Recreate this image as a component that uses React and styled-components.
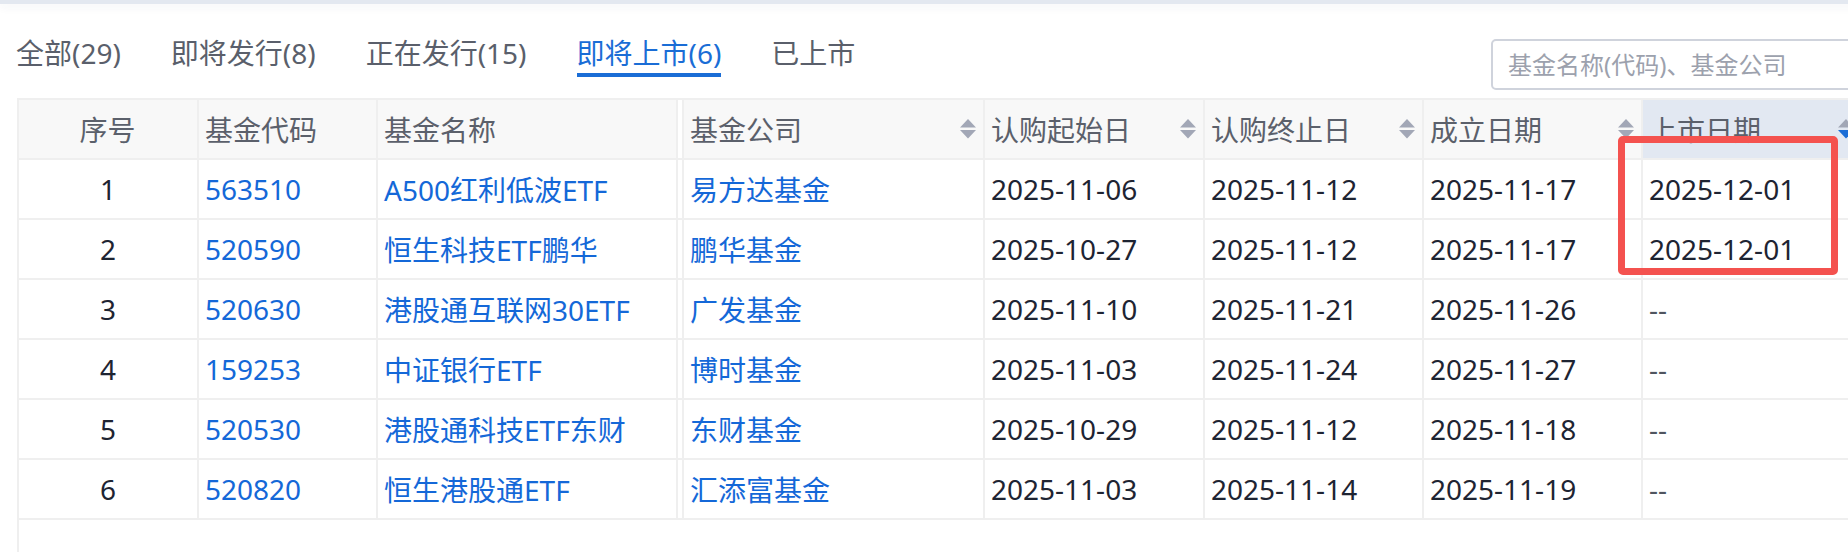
import React from 'react';
import styled, { createGlobalStyle } from 'styled-components';

const Global = createGlobalStyle`
  html, body { margin: 0; padding: 0; background: #fff; overflow: hidden; }
  body { font-family: "Noto Sans", "Noto Sans CJK SC", sans-serif; }
  * { box-sizing: border-box; }
`;

const Page = styled.div`
  position: relative;
  width: 1880px;
  height: 552px;
  overflow: hidden;
`;

const TopBand = styled.div`
  height: 4px;
  background: #e3e8f0;
  box-shadow: 0 3px 8px rgba(40, 60, 100, 0.07);
`;

const Toolbar = styled.div`
  display: flex;
  align-items: flex-start;
  height: 94px;
  padding: 29px 0 0 16px;
`;

const Tabs = styled.div`
  display: flex;
  gap: 50px;
`;

const Tab = styled.div`
  height: 44px;
  line-height: 40px;
  font-size: 28px;
  color: ${(p) => (p.$active ? '#1a6dd6' : '#5a5f6b')};
  border-bottom: 4px solid ${(p) => (p.$active ? '#1a6dd6' : 'transparent')};
  white-space: nowrap;
`;

const Search = styled.input`
  margin-left: auto;
  margin-top: 6px;
  width: 389px;
  height: 51px;
  border: 2px solid #cfd3dc;
  border-radius: 5px;
  padding: 0 15px;
  font-family: "Noto Sans", "Noto Sans CJK SC", sans-serif;
  font-size: 24px;
  outline: none;
  &::placeholder { color: #9ca1ad; }
`;

const TableWrap = styled.div`
  margin-left: 17px;
  border-left: 2px solid #efefef;
  height: 460px;
`;

const Table = styled.table`
  border-collapse: separate;
  border-spacing: 0;
  table-layout: fixed;
  width: 1844px;
  border-top: 2px solid #efefef;
`;

const Th = styled.th`
  width: ${(p) => p.$w}px;
  height: 60px;
  padding: 0 7px 0 6px;
  font-weight: normal;
  font-size: 28px;
  color: #5b606b;
  text-align: ${(p) => (p.$center ? 'center' : 'left')};
  background: ${(p) => (p.$sorted ? '#e2e8f2' : '#f8f8f8')};
  border-right: 2px solid #efefef;
  border-bottom: 2px solid #efefef;
  white-space: nowrap;
  overflow: hidden;
  ${(p) => p.$split && 'padding-left: 12px; box-shadow: inset 4px 0 0 #fff, inset 6px 0 0 #efefef;'}
`;

const HeadInner = styled.div`
  display: flex;
  align-items: center;
  justify-content: ${(p) => (p.$center ? 'center' : 'space-between')};
`;

const Td = styled.td`
  height: 60px;
  padding: 0 6px;
  font-size: 28px;
  color: ${(p) => (p.$link ? '#1468d8' : p.$muted ? '#50555f' : '#1e2432')};
  text-align: ${(p) => (p.$center ? 'center' : 'left')};
  border-right: 2px solid #efefef;
  border-bottom: 2px solid #efefef;
  white-space: nowrap;
  overflow: hidden;
  ${(p) => p.$split && 'padding-left: 12px; box-shadow: inset 4px 0 0 #fff, inset 6px 0 0 #efefef;'}
`;

const Highlight = styled.div`
  position: absolute;
  left: 1618px;
  top: 136px;
  width: 220px;
  height: 139px;
  border: 7px solid #f4524f;
  border-radius: 5px;
  pointer-events: none;
`;

const SortIcon = ({ active }) => (
  <svg width="16" height="20" viewBox="0 0 16 20" style={{ flex: 'none' }}>
    <polygon points="8,0 16,8.5 0,8.5" fill="#a2a7b6" />
    <polygon points="0,11 16,11 8,19.5" fill={active ? '#1a6dd6' : '#a2a7b6'} />
  </svg>
);

const columns = [
  { title: '序号', w: 180, center: true },
  { title: '基金代码', w: 179 },
  { title: '基金名称', w: 300 },
  { title: '基金公司', w: 307, sort: true, split: true },
  { title: '认购起始日', w: 220, sort: true },
  { title: '认购终止日', w: 219, sort: true },
  { title: '成立日期', w: 219, sort: true },
  { title: '上市日期', w: 220, sort: true, sorted: true },
];

const rows = [
  ['1', '563510', 'A500红利低波ETF', '易方达基金', '2025-11-06', '2025-11-12', '2025-11-17', '2025-12-01'],
  ['2', '520590', '恒生科技ETF鹏华', '鹏华基金', '2025-10-27', '2025-11-12', '2025-11-17', '2025-12-01'],
  ['3', '520630', '港股通互联网30ETF', '广发基金', '2025-11-10', '2025-11-21', '2025-11-26', '--'],
  ['4', '159253', '中证银行ETF', '博时基金', '2025-11-03', '2025-11-24', '2025-11-27', '--'],
  ['5', '520530', '港股通科技ETF东财', '东财基金', '2025-10-29', '2025-11-12', '2025-11-18', '--'],
  ['6', '520820', '恒生港股通ETF', '汇添富基金', '2025-11-03', '2025-11-14', '2025-11-19', '--'],
];

const tabs = [
  { label: '全部(29)' },
  { label: '即将发行(8)' },
  { label: '正在发行(15)' },
  { label: '即将上市(6)', active: true },
  { label: '已上市' },
];

export default function App() {
  return (
    <Page>
      <Global />
      <TopBand />
      <Toolbar>
        <Tabs>
          {tabs.map((t) => (
            <Tab key={t.label} $active={t.active}>{t.label}</Tab>
          ))}
        </Tabs>
        <Search placeholder="基金名称(代码)、基金公司" />
      </Toolbar>
      <TableWrap>
        <Table>
          <thead>
            <tr>
              {columns.map((c) => (
                <Th key={c.title} $w={c.w} $center={c.center} $sorted={c.sorted} $split={c.split}>
                  <HeadInner $center={c.center}>
                    <span>{c.title}</span>
                    {c.sort && <SortIcon active={c.sorted} />}
                  </HeadInner>
                </Th>
              ))}
            </tr>
          </thead>
          <tbody>
            {rows.map((r) => (
              <tr key={r[0]}>
                {r.map((v, i) => (
                  <Td
                    key={i}
                    $center={i === 0}
                    $link={i >= 1 && i <= 3}
                    $muted={v === '--'}
                    $split={i === 3}
                  >
                    {v}
                  </Td>
                ))}
              </tr>
            ))}
          </tbody>
        </Table>
      </TableWrap>
      <Highlight />
    </Page>
  );
}
